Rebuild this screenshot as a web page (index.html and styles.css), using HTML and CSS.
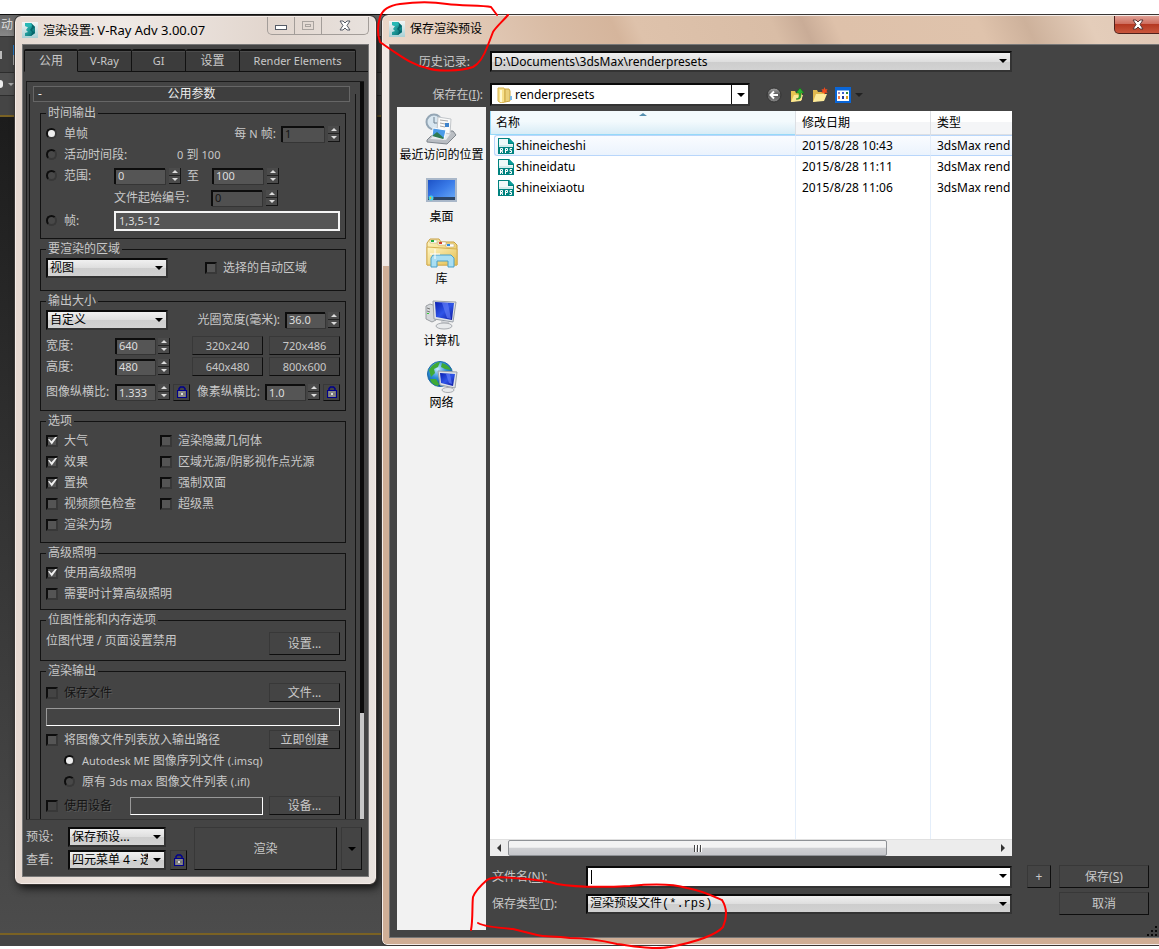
FILE: index.html
```html
<!DOCTYPE html>
<html lang="zh-CN">
<head>
<meta charset="utf-8">
<title>渲染设置</title>
<link rel="stylesheet" href="styles.css">
</head>
<body>
<svg class="defs" aria-hidden="true">
  <defs>
    <linearGradient id="teal" x1="0" y1="0" x2="1" y2="1"><stop offset="0" stop-color="#3cc9c4"/><stop offset="1" stop-color="#03666a"/></linearGradient>
    <linearGradient id="tile" x1="0" y1="0" x2="0" y2="1"><stop offset="0" stop-color="#f2f6f6"/><stop offset="1" stop-color="#a9d0d4"/></linearGradient>
    <linearGradient id="screen" x1="0" y1="0" x2="1" y2="1"><stop offset="0" stop-color="#0a1fb0"/><stop offset=".5" stop-color="#2f55e8"/><stop offset="1" stop-color="#0a149a"/></linearGradient>
    <linearGradient id="desk" x1="0" y1="0" x2="1" y2="1"><stop offset="0" stop-color="#1a4fc4"/><stop offset=".5" stop-color="#3a7be8"/><stop offset="1" stop-color="#6fb0fa"/></linearGradient>
    <linearGradient id="gold" x1="0" y1="0" x2="1" y2="1"><stop offset="0" stop-color="#fff6c4"/><stop offset="1" stop-color="#e3bd4e"/></linearGradient>
    <radialGradient id="globe" cx=".4" cy=".3" r=".7"><stop offset="0" stop-color="#c8ecff"/><stop offset=".5" stop-color="#2d8ed8"/><stop offset="1" stop-color="#0b4e96"/></radialGradient>
    <linearGradient id="ball" x1="0" y1="0" x2="0" y2="1"><stop offset="0" stop-color="#aaa"/><stop offset=".5" stop-color="#555"/><stop offset="1" stop-color="#8a8a8a"/></linearGradient>
    <symbol id="app" viewBox="0 0 16 16">
      <rect width="16" height="16" fill="url(#tile)"/>
      <path d="M3 1h6l4 4v6l-4 3H3v-3l3-1-2-2 2-3-3-1z" fill="url(#teal)"/>
      <path d="M9 1l4 4-3 3 3 3-4 3 1-4-2-2 2-3z" fill="#07666c"/>
      <path d="M3 1h6l1 3-4 1-3-1z" fill="#27b8b5"/>
    </symbol>
    <symbol id="lock" viewBox="0 0 12 14">
      <path d="M3 6V3.500L4.500 2h3L9 3.500V6" fill="none" stroke="#00008c" stroke-width="1.500"/>
      <rect x="1.500" y="5.500" width="9" height="7" fill="#777" stroke="#00008c"/>
      <path d="M3 7h6M3 11h6" stroke="#999"/><path d="M6 8v2" stroke="#ddd" stroke-width="2"/>
    </symbol>
    <symbol id="rps" viewBox="0 0 16 16">
      <path d="M0 0h11l5 5v11H0z" fill="#00827f"/><path d="M1 1h9v5h5v3H1z" fill="#eef8f8"/><path d="M11 0l5 5h-5z" fill="#0a9c98"/><path d="M1 8h14" stroke="#b5dedd"/>
      <path d="M2.500 15v-4.500h2v2h-2M3.500 12.500v1h1v1.500M7.500 15v-4.500h2v2h-2M14 10.500h-2v2h1.500v2h-2" fill="none" stroke="#fff"/>
    </symbol>
  </defs>
</svg>

<main class="desktop">
  <div class="app-strip" aria-hidden="true">
    <div class="strip-title">动</div>
    <div class="strip-tools"><i class="dot"></i><i class="page"></i></div>
    <div class="strip-sub"><i class="pill"></i><i class="caret"></i></div>
    <div class="strip-gap"></div>
    <div class="viewport"></div>
    <div class="strip-foot"></div>
  </div>

  <section class="window settings" aria-label="渲染设置">
    <header class="titlebar">
      <svg class="app-icon"><use href="#app"/></svg>
      <h1>渲染设置: <span>V-Ray Adv 3.00.07</span></h1>
      <div class="caption">
        <button type="button" aria-label="最小化"><svg viewBox="0 0 12 12"><rect x=".5" y="5.500" width="11" height="4" fill="#fff" stroke="#555b66"/></svg></button>
        <button type="button" aria-label="最大化"><svg viewBox="0 0 12 12"><rect x=".5" y="1.500" width="11" height="8" fill="none" stroke="#a9a39f"/><rect x="3.500" y="4.500" width="5" height="2" fill="none" stroke="#a9a39f"/></svg></button>
        <button type="button" class="wide" aria-label="关闭"><svg viewBox="0 0 12 12"><path d="M1 1h3l2 2 2-2h3L8 5.500 11 10H8L6 8l-2 2H1l3-4.500z" fill="#fff" stroke="#555b66"/></svg></button>
      </div>
    </header>
    <div class="client">
      <nav class="tabs">
        <button type="button" class="active">公用</button><button type="button">V-Ray</button><button type="button">GI</button><button type="button">设置</button><button type="button" class="long">Render Elements</button>
      </nav>
      <div class="scroller">
        <div class="pane">
          <button type="button" class="rollout"><span>-</span>公用参数</button>
          <div class="groups">
            <fieldset class="g-time">
              <legend>时间输出</legend>
              <div class="row"><label class="opt grow"><input type="radio" name="time" checked>单帧</label><label for="nth">每 <span class="latin">N</span> 帧:</label><input class="num short" id="nth" value="1" disabled><span class="spin"></span></div>
              <div class="row"><label class="opt lead-wide"><input type="radio" name="time">活动时间段:</label><span><span class="latin">0</span> 到 <span class="latin">100</span></span></div>
              <div class="row"><label class="opt lead"><input type="radio" name="time">范围:</label><input class="num" aria-label="起始" value="0"><span class="spin"></span><label class="to" for="to">至</label><input class="num" id="to" value="100"><span class="spin"></span></div>
              <div class="row tall"><label class="number-from" for="from">文件起始编号:</label><input class="num" id="from" value="0" disabled><span class="spin"></span></div>
              <div class="row tall"><label class="opt lead"><input type="radio" name="time">帧:</label><input class="frames" aria-label="帧" value="1,3,5-12"></div>
            </fieldset>
            <fieldset class="g-area">
              <legend>要渲染的区域</legend>
              <div class="row"><span class="select w-m"><select aria-label="区域"><option>视图</option></select></span><label class="opt auto-area"><input type="checkbox">选择的自动区域</label></div>
            </fieldset>
            <fieldset class="g-size">
              <legend>输出大小</legend>
              <div class="row"><span class="select w-m"><select aria-label="输出大小"><option>自定义</option></select></span><label class="push" for="ap">光圈宽度(毫米):</label><input class="num mini" id="ap" value="36.0"><span class="spin"></span></div>
              <div class="row"><label class="lead-size" for="w">宽度:</label><input class="num mini" id="w" value="640"><span class="spin"></span><button type="button" class="btn push">320x240</button><button type="button" class="btn next">720x486</button></div>
              <div class="row"><label class="lead-size" for="h">高度:</label><input class="num mini" id="h" value="480"><span class="spin"></span><button type="button" class="btn push">640x480</button><button type="button" class="btn next">800x600</button></div>
              <div class="row ratio"><label class="lead-size" for="ia">图像纵横比:</label><input class="num mini" id="ia" value="1.333"><span class="spin"></span><button type="button" class="lock" aria-label="锁定图像纵横比"><svg><use href="#lock"/></svg></button><label class="push" for="pa">像素纵横比:</label><input class="num mini" id="pa" value="1.0"><span class="spin"></span><button type="button" class="lock" aria-label="锁定像素纵横比"><svg><use href="#lock"/></svg></button></div>
            </fieldset>
            <fieldset class="g-opts">
              <legend>选项</legend>
              <div class="pairs">
                <label class="opt"><input type="checkbox" checked>大气</label><label class="opt"><input type="checkbox">渲染隐藏几何体</label>
                <label class="opt"><input type="checkbox" checked>效果</label><label class="opt"><input type="checkbox">区域光源/阴影视作点光源</label>
                <label class="opt"><input type="checkbox" checked>置换</label><label class="opt"><input type="checkbox">强制双面</label>
                <label class="opt"><input type="checkbox">视频颜色检查</label><label class="opt"><input type="checkbox">超级黑</label>
                <label class="opt"><input type="checkbox">渲染为场</label>
              </div>
            </fieldset>
            <fieldset class="g-light">
              <legend>高级照明</legend>
              <div class="row"><label class="opt"><input type="checkbox" checked>使用高级照明</label></div>
              <div class="row"><label class="opt"><input type="checkbox">需要时计算高级照明</label></div>
            </fieldset>
            <fieldset class="g-bitmap">
              <legend>位图性能和内存选项</legend>
              <div class="row"><span class="grow">位图代理 / 页面设置禁用</span><button type="button" class="btn">设置...</button></div>
            </fieldset>
            <fieldset class="g-out">
              <legend>渲染输出</legend>
              <div class="row"><label class="opt grow off"><input type="checkbox" disabled>保存文件</label><button type="button" class="btn">文件...</button></div>
              <div class="row path"><input class="line" aria-label="输出文件" readonly></div>
              <div class="row"><label class="opt grow"><input type="checkbox">将图像文件列表放入输出路径</label><button type="button" class="btn">立即创建</button></div>
              <div class="row in"><label class="opt"><input type="radio" name="list" checked><span><span class="latin">Autodesk ME</span> 图像序列文件 <span class="latin">(.imsq)</span></span></label></div>
              <div class="row in"><label class="opt"><input type="radio" name="list"><span>原有 <span class="latin">3ds max</span> 图像文件列表 <span class="latin">(.ifl)</span></span></label></div>
              <div class="row device"><label class="opt off lead-dev"><input type="checkbox" disabled>使用设备</label><input class="line" aria-label="设备" readonly><button type="button" class="btn">设备...</button></div>
            </fieldset>
          </div>
        </div>
        <div class="track"><i></i></div>
      </div>
      <footer class="actions">
        <div class="presets">
          <label for="preset">预设:</label><span class="select"><select id="preset"><option>保存预设...</option></select></span><i></i>
          <label for="view">查看:</label><span class="select"><select id="view"><option>四元菜单 4 - 透视</option></select></span><button type="button" class="lock" aria-label="锁定视图"><svg><use href="#lock"/></svg></button>
        </div>
        <button type="button" class="btn render">渲染</button>
        <button type="button" class="btn more" aria-label="更多"><i class="tri"></i></button>
      </footer>
    </div>
  </section>

  <section class="window save" aria-label="保存渲染预设">
    <header class="titlebar">
      <svg class="app-icon"><use href="#app"/></svg>
      <h2>保存渲染预设</h2>
      <button type="button" class="close" aria-label="关闭"><svg viewBox="0 0 12 12"><path d="M1 1h3l2 2 2-2h3L8 5.500 11 10H8L6 8l-2 2H1l3-4.500z" fill="#fff" stroke="#5b3534"/></svg></button>
    </header>
    <div class="client">
      <div class="line-row history"><label for="hist">历史记录:</label><span class="select"><select id="hist"><option>D:\Documents\3dsMax\renderpresets</option></select></span></div>
      <div class="line-row savein"><label for="where">保存在(<u>I</u>):</label>
        <span class="combo">
          <svg class="folder" viewBox="0 0 16 16"><path d="M1 1h6l1 2v12l-4 1-3-2z" fill="#f7e08a" stroke="#d8b24c"/><path d="M8 2h4l1 2v10l-5 1z" fill="#ead07a" stroke="#c9a545"/><path d="M4 3v12" stroke="#fff8d0" stroke-width="2"/><path d="M13 9h2v4h-2z" fill="#7bbbe8"/></svg>
          <select id="where"><option>renderpresets</option></select>
        </span>
        <div class="tools">
          <button type="button" aria-label="后退"><svg viewBox="0 0 16 16"><circle cx="8" cy="8" r="7" fill="url(#ball)" stroke="#333"/><path d="M12 8H5M8 4.500L4.500 8 8 11.500" fill="none" stroke="#fff" stroke-width="2"/></svg></button>
          <button type="button" aria-label="向上"><svg viewBox="0 0 16 16"><path d="M2 4h4l1 2h6v7L2 15z" fill="#e8c452"/><path d="M2 15l3-7h9l-2 6z" fill="#fbe893"/><path d="M7 12c4 0 3-4 3-6H7l4-5 4 5h-3c0 4 0 7-5 6z" fill="#2fae34" stroke="#0a7010" stroke-width=".5"/></svg></button>
          <button type="button" aria-label="新建文件夹"><svg viewBox="0 0 16 16"><path d="M1 3h4l1 2h7v7L1 15z" fill="#e2b94e"/><path d="M1 15l3-8h11l-3 7z" fill="#fdeb9c"/><path d="M12.500 0l1 2.500 2-.5-1 2 1 2-2-.5-1 2-1-2-2 .5 1-2-1-2 2 .5z" fill="#f04a1c"/></svg></button>
          <button type="button" aria-label="查看方式"><svg viewBox="0 0 16 16"><rect x="1" y="1" width="14" height="14" fill="#fff" stroke="#0a66d8" stroke-width="2"/><path d="M0 2h16" stroke="#0a66d8" stroke-width="3"/><path d="M3 5h2v2H3z" fill="#a08ac0"/><path d="M7 5h2v2H7z" fill="#4060d0"/><path d="M11 5h2v2h-2z" fill="#308a38"/><path d="M3 9h2v3H3z" fill="#f08050"/><path d="M7 9h2v3H7z" fill="#203898"/><path d="M11 9h2v3h-2z" fill="#d8a020"/></svg></button>
          <i class="tri dim"></i>
        </div>
      </div>
      <div class="browse">
        <nav class="places">
          <button type="button"><svg viewBox="0 0 32 32"><path d="M2 27l9-9h17l3 4-9 9-20-2z" fill="#b9bdc2" stroke="#7f868d"/><path d="M5 26l7-6h14l-5 7z" fill="#e6e9ec"/><circle cx="9" cy="9" r="7.500" fill="#d8e6f0" stroke="#94a6b5" stroke-width="2"/><path d="M9 4v6h4" fill="none" stroke="#6c8090"/><path d="M13 4l13 2-1 15-13-3z" fill="#fafafa" stroke="#c2c6ca"/><path d="M15 7l8 1M15 10l5 1M15 13l5 1" stroke="#aaa"/><path d="M20 10h4v4h-4z" fill="#3e83cc"/><path d="M8 15l13 2-2 9-12-3z" fill="#4b9be8" stroke="#fff"/><path d="M7 23l5-4 7 6-1 1z" fill="#2f7a52"/></svg><span>最近访问的位置</span></button>
          <button type="button"><svg viewBox="0 0 32 32"><rect x="1" y="4" width="29" height="22" fill="url(#desk)" stroke="#a9b7c9" stroke-width="2"/><path d="M2 22h27v3H2z" fill="#2c4668"/><circle cx="5" cy="23" r="2.500" fill="#4bd0e0"/><path d="M4 22h1v2H4z" fill="#f5b32c"/></svg><span>桌面</span></button>
          <button type="button"><svg viewBox="0 0 32 32"><path d="M1 6l3-4h9l2 3h13l3 3v20H1z" fill="url(#gold)" stroke="#c9a040"/><path d="M4 3h7v3H4zM12 5h8v3h-8zM20 7h8v3h-8z" fill="#fff" stroke="#b9a368" stroke-width=".5"/><path d="M5 3h3v2H5z" fill="#1faa3c"/><path d="M13 5h3v2h-3z" fill="#d8402c"/><path d="M21 7h3v2h-3z" fill="#2e8ce0"/><path d="M1 10l30 2v16H1z" fill="url(#gold)" stroke="#d6b052"/><path d="M5 30V21l2-3h18l3 3v9h-6v-6H11v6z" fill="#a9def2" stroke="#4aa0c8"/><path d="M9 12v10M4 17h10" stroke="#fff"/></svg><span>库</span></button>
          <button type="button"><svg viewBox="0 0 32 32"><path d="M1 7l4-2 6 2v14l-4 2-6-3z" fill="#d4d7da" stroke="#9a9ea2"/><path d="M2 9l3 1M2 12l3 1" stroke="#777"/><path d="M2 14h2v1H2z" fill="#3c3"/><path d="M8 2l23 1-3 20-19-3z" fill="#dfe3e8" stroke="#9aa0a8"/><path d="M10 3l19 1-2 17-16-3z" fill="url(#screen)"/><path d="M17 4l6 0 3 16-4-1z" fill="#5f7af5" opacity=".7"/><path d="M16 22l8 1 1 4-8 0z" fill="#c9ccd0"/><ellipse cx="19" cy="27" rx="8" ry="3" fill="#e8eaec" stroke="#a8abb0"/></svg><span>计算机</span></button>
          <button type="button"><svg viewBox="0 0 32 32"><circle cx="14" cy="13" r="12.500" fill="url(#globe)" stroke="#1b6ba8"/><path d="M3 9c4-7 9-8 11-8l-2 5-4 2 1 4-4 4zM4 18l6 0 3 5-1 2C8 24 5 22 4 18zM16 2c4 1 7 3 9 7l-6-1-4-2z" fill="#3faa36"/><path d="M12 10l19 1-2 16-15-3z" fill="#dfe3e8" stroke="#9aa0a8"/><path d="M14 12l15 1-2 12-12-3z" fill="url(#screen)"/><path d="M20 13l4 0 2 10-3-1z" fill="#5f7af5" opacity=".7"/><ellipse cx="22" cy="29" rx="6" ry="2.500" fill="#e8eaec" stroke="#a8abb0"/></svg><span>网络</span></button>
        </nav>
        <div class="content">
          <div class="list">
            <table>
              <colgroup><col><col class="c-date"><col class="c-type"></colgroup>
              <thead><tr><th class="sorted">名称<i class="sort"></i></th><th>修改日期</th><th>类型</th></tr></thead>
              <tbody>
                <tr class="hot"><td><div class="file"><svg><use href="#rps"/></svg>shineicheshi</div></td><td>2015/8/28 10:43</td><td>3dsMax rend</td></tr>
                <tr><td><div class="file"><svg><use href="#rps"/></svg>shineidatu</div></td><td>2015/8/28 11:11</td><td>3dsMax rend</td></tr>
                <tr><td><div class="file"><svg><use href="#rps"/></svg>shineixiaotu</div></td><td>2015/8/28 11:06</td><td>3dsMax rend</td></tr>
                <tr class="fill"><td></td><td></td><td></td></tr>
              </tbody>
            </table>
            <div class="hbar"><button type="button" class="arrow left" aria-label="向左滚动"></button><div class="rail"><i class="thumb"><b></b><b></b><b></b></i></div><button type="button" class="arrow" aria-label="向右滚动"></button></div>
          </div>
          <form class="fields">
            <label for="fname">文件名(<u>N</u>):</label><span class="select white"><input id="fname" type="text"></span><button type="button" class="btn">+</button><button type="button" class="btn">保存(<u>S</u>)</button>
            <label for="ftype">保存类型(<u>T</u>):</label><span class="select mono"><select id="ftype"><option>渲染预设文件(*.rps)</option></select></span><button type="button" class="btn">取消</button>
          </form>
        </div>
      </div>
      <svg class="grip" viewBox="0 0 12 12"><path d="M10 1h2v2h-2zM6 5h2v2H6zM10 5h2v2h-2zM2 9h2v2H2zM6 9h2v2H6zM10 9h2v2h-2z" fill="#0a0a0a"/></svg>
    </div>
  </section>

  <svg class="marks" viewBox="0 0 1159 949" aria-hidden="true">
    <path d="M508 15C502 22 496 27 493 32L488 45C484 56 479 64 473 67C461 71 437 72 427 68C412 65 401 56 390 49L380 42C377 34 378 24 380 17C383 8 392 5 400 4C415 2 434 2 447 4C461 6 482 5 491 7L497 15"/>
    <path d="M471 930C473 920 472 905 473 897C475 892 480 886 487 880C492 877 503 877 513 878C530 879 545 880 557 884C580 888 610 887 630 886C650 884 673 884 687 888C700 890 713 896 722 900C727 908 727 918 723 927C715 936 690 943 670 947C652 950 634 946 617 944C600 940 585 938 570 938C550 936 545 937 537 935L513 929C500 928 485 927 478 923"/>
  </svg>
</main>
</body>
</html>
```
FILE: styles.css
```css
* { box-sizing: border-box; }
body { margin: 0; background: #fff; font: 12px/14px "Noto Sans", "Noto Sans CJK SC", sans-serif; color: #c8c8c8; }
button, input, select { font: inherit; color: inherit; margin: 0; padding: 0; border-radius: 0; }
button { background: none; border: 0; white-space: nowrap; }
svg { display: block; }
h1, h2 { margin: 0; font-size: 12px; font-weight: 400; line-height: 16px; white-space: nowrap; }
label { white-space: nowrap; }
.latin { font-size: 11px; }
.defs { position: absolute; width: 0; height: 0; }
.desktop { position: relative; height: 100vh; min-height: 949px; overflow: hidden; }

.app-strip { display: flex; flex-direction: column; height: 100%; padding: 14px 0 3px; }
.strip-title { height: 22px; padding: 2px 1px; background: linear-gradient(#666, #888); border-top: 1px solid #111; line-height: 16px; color: #ddd; }
.strip-tools { height: 36px; background: #444; border-top: 1px solid #333; display: flex; align-items: center; gap: 11px; }
.dot { width: 2px; height: 8px; background: #bbb; }
.page { width: 2px; height: 20px; background: linear-gradient(#2a86d8 50%, #aaa 50%); }
.strip-sub { height: 23px; background: #505050; border-top: 1px solid #2d2d2d; display: flex; align-items: center; gap: 5px; }
.pill { width: 3px; height: 8px; background: #eee; border-radius: 0 3px 3px 0; }
.caret { border: 3px solid transparent; border-top-color: #aaa; border-bottom: 0; }
.strip-gap { height: 22px; background: #454545; border-top: 1px solid #2d2d2d; border-bottom: 2px solid #7a6224; }
.viewport { flex: 1; background: linear-gradient(#1c1c1c, #4c4c4c); border-bottom: 2px solid #7a6224; }
.strip-foot { height: 11px; background: #444; }

.window { position: absolute; display: flex; flex-direction: column; padding: 0 6px 6px; border: 1px solid #f4ece8; outline: 1px solid #3a3634; }
.titlebar { display: flex; color: #000; }
.app-icon { width: 16px; height: 16px; margin-top: 5px; }
.titlebar h1, .titlebar h2 { margin: 5px 0 0 5px; flex: 1; }
.titlebar h1 span { font-size: 13px; }
.client { background: #444; border: 1px solid #777; flex: 1; min-height: 0; display: flex; flex-direction: column; }

.settings { left: 15px; top: 16px; bottom: 65px; width: 361px; border-radius: 6px; background: linear-gradient(90deg, #e5d8d0, #efe9e5 30%, #e2d6ce 70%, #e8e2de); box-shadow: 3px 4px 8px #111; }
.settings .titlebar { height: 27px; }
.caption { display: flex; height: 18px; border: 1px solid #a39d99; border-top: 0; border-radius: 0 0 5px 5px; }
.caption button { width: 27px; display: grid; place-items: center; border-right: 1px solid #a39d99; }
.caption .wide { width: 46px; border: 0; }
.caption svg { width: 12px; height: 12px; }

.tabs { display: flex; height: 27px; margin: 4px 0 1px 1px; padding-bottom: 4px; font-size: 11px; }
.tabs button { width: 54px; border: 1px solid #111; border-left-width: 0; border-top-width: 2px; background: #3c3c3c; box-shadow: inset 0 1px #4c4c4c; border-radius: 2px 2px 0 0; }
.tabs .active { border-left-width: 1px; border-bottom-color: #444; background: #444; font-size: 12px; }
.tabs button:nth-child(4) { font-size: 12px; }
.tabs .long { width: 116px; }
.tabs::after { content: ""; flex: 1; border-bottom: 1px solid #111; }

.scroller { flex: 1; min-height: 0; display: flex; margin: 4px 4px 0 3px; border: 1px solid #1a1a1a; border-right: 0; border-bottom-color: #333; }
.pane { flex: 1; min-width: 0; overflow: hidden; padding: 4px 10px 0 6px; position: relative; }
.pane::before { content: ""; position: absolute; inset: 12px 4px 0 2px; border: solid #151515; border-width: 0 1px; pointer-events: none; }
.rollout { display: flex; justify-content: center; align-items: center; position: relative; width: 100%; height: 16px; border: 1px solid #666; background: #3e3e3e; color: #eee; }
.rollout span { position: absolute; left: 4px; }
.groups { padding: 4px 4px 0 7px; }
.track { width: 4px; background: #0b0b0b; display: flex; align-items: flex-end; }
.track i { width: 4px; height: 106px; background: #c8c8c8; }

fieldset { margin: 0 0 3px; min-width: 0; border: 1px solid #121212; padding: 2px 5px 6px; }
legend { padding: 0 2px; height: 14px; line-height: 14px; }
.row { display: flex; align-items: center; height: 21px; white-space: nowrap; }
.tall { height: 23px; }
.g-time { padding-top: 3px; padding-bottom: 6px; }
.g-area { padding-top: 1px; padding-bottom: 12px; }
.g-size { padding-top: 1px; padding-bottom: 8px; }
.g-size .row:nth-of-type(2) { margin-top: 5px; }
.g-size .ratio { margin-top: 5px; height: 20px; }
.g-opts { padding-bottom: 7px; }
.g-light { padding-bottom: 5px; }
.g-bitmap { padding: 5px; }
.g-out { padding-top: 4px; height: 200px; }
.grow { flex: 1; }
.push { margin-left: auto; }

.opt { display: flex; align-items: center; gap: 6px; }
.opt input { appearance: none; flex: none; display: grid; place-items: center; width: 12px; height: 12px; background: #555; border: 2px solid; border-color: #0d0d0d #383838 #383838 #0d0d0d; }
.opt input[type=radio] { width: 11px; height: 11px; margin-right: 1px; border-radius: 50%; background: #484848; }
.opt input[type=radio]:checked::after { content: ""; width: 7px; height: 7px; border-radius: 50%; background: #eee; }
.opt input[type=checkbox]:checked::after { content: ""; width: 9px; height: 8px; background: #f0f0f0; clip-path: polygon(0 35%, 15% 30%, 38% 58%, 85% 0, 100% 10%, 42% 100%); }
.off { color: #141414; text-shadow: 1px 1px #5a5a5a; }
.opt.off input { background: #444; }
.num { width: 51px; height: 16px; padding: 0 2px 2px; border: solid #0d0d0d; border-width: 2px 0 0 2px; background: #555; font-size: 11px; line-height: 12px; color: #ddd; box-shadow: 1px 1px #353535; }
.num:disabled { color: #151515; background: #505050; }
.short { width: 43px; margin-left: 5px; }
.mini { width: 40px; }
.push + .mini { margin-left: 5px; }
.spin { position: relative; width: 12px; height: 16px; margin-left: 4px; border: 1px solid #151515; border-width: 0 1px 1px 0; background: linear-gradient(#4b4b4b 7px, #222 7px, #222 8px, #4b4b4b 8px); }
.mini + .spin { margin-left: 3px; }
.spin::before, .spin::after { content: ""; position: absolute; left: 3px; border: 3px solid transparent; border-width: 0 3px 3px; border-bottom-color: #ddd; top: 2px; }
.spin::after { top: 10px; border-width: 3px 3px 0; border-top-color: #ddd; }
.lead { width: 68px; }
.lead-wide { width: 131px; }
.to { width: 31px; padding-left: 6px; }
.number-from { margin-left: 68px; width: 97px; }
.frames { flex: 1; min-width: 0; height: 20px; border: 2px solid #f4f4f4; background: #555; padding: 0 3px 1px; font-size: 11px; color: #ddd; }
.auto-area { margin-left: 37px; }
.lead-size { width: 69px; }
.btn { width: 71px; height: 19px; border: 1px solid; border-color: #383838 #0e0e0e #0e0e0e #383838; background: #444; }
.g-size .btn { font-size: 11px; }
.next { margin-left: 6px; }
.lock { width: 17px; height: 17px; margin-left: 3px; display: grid; place-items: center; border: 1px solid; border-color: #383838 #0e0e0e #0e0e0e #383838; }
.lock svg { width: 12px; height: 14px; }
.pairs { display: grid; grid-template-columns: 114px 1fr; grid-auto-rows: 21px; }
.g-bitmap .row { height: 23px; align-items: flex-start; }
.g-bitmap .grow { padding-top: 2px; }
.g-bitmap .btn { height: 23px; }
.line { flex: 1; min-width: 0; height: 18px; border: 1px solid #fff; border-color: #999 #fff #fff #999; background: #444; }
.path { margin: 4px 0 2px; height: 20px; }
.in { padding-left: 18px; }
.device { margin-top: 3px; }
.lead-dev { width: 84px; }
.device .btn { margin-left: 6px; }

.select { position: relative; display: flex; height: 20px; border: 2px solid; border-color: #0a0a0a #333 #333 #0a0a0a; background: linear-gradient(#f0f0f0, #dedede 50%, #cdcdcd 51%, #d2d2d2); color: #000; }
.select select, .select input { appearance: none; flex: 1; width: 100%; min-width: 0; border: 0; background: none; padding: 0 0 0 2px; outline: 0; }
.select::after { content: ""; position: absolute; right: 3px; top: 6px; border: 4px solid transparent; border-width: 4px 4px 0; border-top-color: #000; }
.w-m { width: 122px; }
.actions { display: flex; gap: 4px; padding: 7px 6px 6px 3px; }
.presets { display: grid; grid-template-columns: 42px 98px 20px; row-gap: 3px; align-items: center; margin-right: 4px; }
.presets select { padding-right: 16px; }
.presets .lock { height: 20px; margin-left: 4px; }
.render { flex: 1; height: 43px; }
.more { width: 21px; height: 43px; display: grid; place-items: center; }
.tri { border: 4px solid transparent; border-width: 4px 4px 0; border-top-color: #000; }

.save { left: 382px; right: -8px; top: 15px; bottom: 4px; border-radius: 6px 0 0 5px; padding-right: 0; background: linear-gradient(#f0e8e4 0, #f0e8e4 250px, #cfae96 250px); }
.save .titlebar { height: 28px; margin: 0 0 0 -6px; padding-left: 6px; border-radius: 5px 0 0 0; background: linear-gradient(65deg, #ecd9cb 0%, #d9bca5 22%, #d5b59c 30%, #dec2ab 33%, #d9bda6 50%, #c9ac97 54%, #dec1aa 58%, #dfc3ac 76%, #cdb19b 82%, #e4cdba 90%, #e0c8b6); }
.close { width: 52px; height: 18px; display: grid; place-items: center; border: 1px solid #4e211c; border-top: 0; border-radius: 0 0 0 5px; background: linear-gradient(#e0a095, #cf6e5f 45%, #b53822 50%, #c9573d); }
.close svg { width: 12px; height: 12px; margin-right: 4px; }
.save .client { position: relative; padding: 6px 7px 7px 7px; }
.line-row { display: flex; align-items: center; }
.line-row label { width: 93px; text-align: right; padding-right: 7px; }
.history { margin-right: 146px; }
.history label { padding-right: 20px; }
.history .select { flex: 1; height: 21px; }
.savein { margin-top: 11px; }
.combo { position: relative; display: flex; align-items: center; width: 260px; height: 23px; padding-left: 5px; gap: 2px; border: 2px solid; border-color: #0a0a0a #333 #333 #0a0a0a; background: #fff; color: #000; }
.combo select { appearance: none; flex: 1; border: 0; background: none; align-self: stretch; }
.combo::after { content: ""; position: absolute; right: 3px; top: 8px; border: 4px solid transparent; border-width: 4px 4px 0; border-top-color: #000; }
.combo::before { content: ""; position: absolute; right: 16px; top: 0; bottom: 0; border-left: 1px solid #111; }
.folder { width: 16px; height: 16px; }
.tools { display: flex; align-items: center; gap: 7px; margin-left: 16px; }
.tools svg { width: 16px; height: 16px; }
.dim { border-top-color: #222; margin-left: -3px; }
.browse { flex: 1; min-height: 0; display: flex; margin-top: 1px; }
.places { width: 89px; background: #f2f2f2; color: #000; display: flex; flex-direction: column; align-items: center; gap: 12px; padding-top: 6px; }
.places button { display: flex; flex-direction: column; align-items: center; gap: 2px; height: 50px; }
.places svg { width: 32px; height: 32px; }
.places span { line-height: 16px; }
.content { flex: 1; min-width: 0; display: flex; flex-direction: column; margin: 4px 0 0 4px; }
.list { flex: 1; min-height: 0; margin-right: 146px; background: #fff; color: #000; display: flex; flex-direction: column; }
table { flex: 1; width: 100%; height: 1px; table-layout: fixed; border-collapse: separate; border-spacing: 0; }
.c-date { width: 135px; }
.c-type { width: 82px; }
th { position: relative; height: 24px; padding: 0 6px; text-align: left; font-weight: 400; background: linear-gradient(#fff 50%, #f4f5f7 50%); border: solid #dcdfe4; border-width: 0 0 1px 1px; }
th:first-child { border-left: 0; }
th.sorted { background: linear-gradient(#f3fafd 45%, #d8ecf6); border-color: #96d9f9; box-shadow: inset 1px 0 #96d9f9; }
.sort { position: absolute; left: 49%; top: 2px; border: 4px solid transparent; border-width: 0 4px 3px; border-bottom-color: #5590b0; }
td { height: 21px; padding: 0 0 0 6px; border-left: 1px solid #e4eefa; white-space: nowrap; }
td:first-child { border-left: 0; padding-left: 4px; }
.hot td:not(:first-child), .hot .file { background: linear-gradient(#fafcff, #ebf3fd); border-top: 1px solid #b8d6fb; border-bottom: 1px solid #b8d6fb; }
.hot .file { border-left: 1px solid #b8d6fb; border-radius: 3px 0 0 3px; padding-left: 3px; }
.file { display: flex; align-items: center; gap: 2px; height: 21px; padding-left: 4px; }
.file svg { width: 16px; height: 16px; }
.fill td { height: auto; }
.hbar { display: flex; height: 17px; background: #ececec; border-top: 1px solid #e0e0e0; }
.rail { flex: 1; display: flex; }
.thumb { width: 78%; display: flex; justify-content: center; align-items: center; gap: 2px; border: 1px solid #8f9296; border-radius: 2px; background: linear-gradient(#f3f3f3 45%, #d0d1d4 50%, #c5c6ca); }
.thumb b { width: 1px; height: 7px; background: #444; box-shadow: 1px 0 #fff; }
.arrow { width: 18px; display: grid; place-items: center; }
.arrow::after { content: ""; border: 4px solid transparent; border-width: 4px 0 4px 4px; border-left-color: #333; }
.left::after { border-width: 4px 4px 4px 0; border-right-color: #333; }
.fields { display: grid; grid-template-columns: 96px 1fr 15px 24px 8px 90px; row-gap: 4px; align-items: center; margin: 9px 9px 15px 0; }
.fields label { grid-column: 1; padding-left: 2px; }
.fields .select { grid-column: 2; }
.fields .btn { grid-column: 6; width: auto; height: 23px; }
.fields .white + .btn { grid-column: 4; }
.fields .white { height: 22px; background: #fff; }
.white::before { content: ""; position: absolute; left: 3px; top: 2px; width: 1px; height: 14px; background: #000; }
.mono { font-family: "Liberation Mono", "Noto Sans CJK SC", monospace; }
.grip { position: absolute; right: 8px; bottom: 0; width: 12px; height: 12px; }
.marks { position: absolute; left: 0; top: 0; width: 1159px; height: 949px; pointer-events: none; }
.marks path { fill: none; stroke: #f00; stroke-width: 2; stroke-linejoin: round; stroke-linecap: round; }
```
